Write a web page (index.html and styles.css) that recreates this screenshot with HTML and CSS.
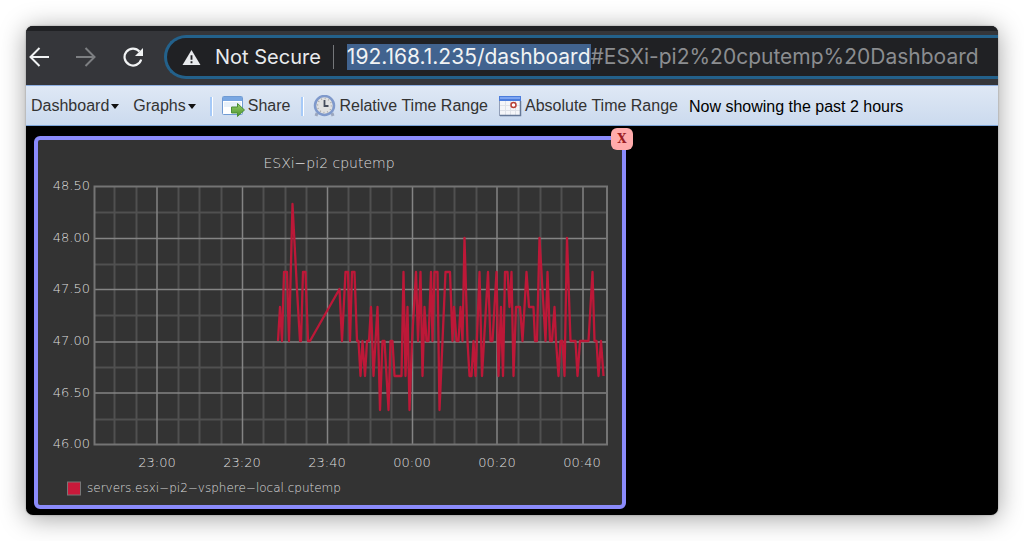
FILE: index.html
```html
<!DOCTYPE html>
<html lang="en">
<head>
<meta charset="utf-8">
<title>ESXi-pi2 cputemp Dashboard</title>
<link rel="stylesheet" href="styles.css">
</head>
<body>
<div class="window">
  <header class="browser-bar">
    <nav class="nav-buttons">
      <button type="button" class="nav-button" aria-label="Back">
        <svg viewBox="0 0 20 20" fill="none" stroke="#f1f3f4" stroke-width="2"><path d="M20 10H2M10.500 1L1.500 10l9 9"/></svg>
      </button>
      <button type="button" class="nav-button" aria-label="Forward">
        <svg viewBox="0 0 20 20" fill="none" stroke="#7d7f82" stroke-width="2"><path d="M0 10h18M9.500 1l9 9-9 9"/></svg>
      </button>
      <button type="button" class="nav-button" aria-label="Reload">
        <svg viewBox="0 0 20 20" fill="none" stroke="#f1f3f4" stroke-width="2.200"><path d="M18.200 12.500A8.500 8.500 0 1 1 16.500 4.500"/><path d="M20 1v8h-8z" fill="#f1f3f4" stroke="none"/></svg>
      </button>
    </nav>
    <div class="omnibox">
      <svg class="warning" viewBox="0 0 20 18"><path d="M10 1L19.500 17H.5z" fill="#e8eaed"/><path d="M10 6.500v5M10 13v2" stroke="#202124" stroke-width="2"/></svg>
      <label class="security" for="address">Not Secure</label>
      <span class="divider"></span>
      <input id="address" class="address" type="text" spellcheck="false" value="192.168.1.235/dashboard#ESXi-pi2%20cputemp%20Dashboard">
    </div>
  </header>
  <div class="toolbar">
    <button type="button" class="tool menu">Dashboard<span class="caret"></span></button>
    <button type="button" class="tool menu">Graphs<span class="caret"></span></button>
    <span class="separator"></span>
    <button type="button" class="tool">
      <svg class="tool-icon" viewBox="0 0 23 22"><defs><linearGradient id="arrow" x2="0" y2="1"><stop stop-color="#9bd06b"/><stop offset="1" stop-color="#47912c"/></linearGradient></defs><rect x=".5" y="1.500" width="20" height="18" rx="1" fill="#fff" stroke="#709bd3"/><path d="M1 2h19v4H1z" fill="#79a7e2"/><path d="M2 7h17v5H2z" fill="#e8f1fa"/><path d="M9.500 12h6V8.500l7 6.500-7 6.500v-3.500h-6z" fill="url(#arrow)" stroke="#4b8e36"/></svg>
      Share
    </button>
    <span class="separator"></span>
    <button type="button" class="tool">
      <svg class="tool-icon" viewBox="0 0 23 22"><path d="M4 18l-1 3M19 18l1 3" stroke="#9ca7bd" stroke-width="3"/><circle cx="11.500" cy="10.500" r="9.500" fill="#e0e1e2" stroke="#7f99cb" stroke-width="2.500"/><circle cx="11.500" cy="10.500" r="7" fill="none" stroke="#aaa" stroke-width="1.500" stroke-dasharray="1 2.660"/><path d="M11.500 5v6h4" fill="none" stroke="#474e5e" stroke-width="1.800"/></svg>
      Relative Time Range
    </button>
    <button type="button" class="tool">
      <svg class="tool-icon" viewBox="0 0 23 22"><rect x=".5" y="1.500" width="21" height="19" fill="#f5f6f9" stroke="#929fb8"/><path d="M0 1h22v5H0z" fill="#4b7cdc"/><path d="M1 2h20v2H1z" fill="#7da4f1"/><path d="M1 10.500h20M1 15.500h20M6.500 6v14M11.500 6v14M16.500 6v14" stroke="#dfe2e8"/><circle cx="14.500" cy="10" r="2.500" fill="#fff" stroke="#b94036" stroke-width="1.500"/><path d="M21.500 6v14.500H1" fill="none" stroke="#667998" stroke-width="1.500"/></svg>
      Absolute Time Range
    </button>
    <span class="status">Now showing the past 2 hours</span>
  </div>
  <main class="workspace">
    <section class="graph">
      <button type="button" class="close" aria-label="Close graph">X</button>
      <svg class="chart" viewBox="38 140 584 365" role="img" aria-label="ESXi-pi2 cputemp">
        <path class="minor" d="M114.500 187v257M136.500 187v257M178.500 187v257M199.500 187v257M221.500 187v257M263.500 187v257M285.500 187v257M306.500 187v257M348.500 187v257M370.500 187v257M391.500 187v257M434.500 187v257M454.500 187v257M476.500 187v257M518.500 187v257M540.500 187v257M561.500 187v257M95 212.500h512M95 264.500h512M95 315.500h512M95 367.500h512M95 419.500h512"/>
        <path class="major" d="M157 187v257M242.500 187v257M327.500 187v257M412.500 187v257M497 187v257M583 187v257M95 238.500h512M95 289.500h512M95 342h512M95 393h512"/>
        <rect class="frame" x="94.500" y="186.500" width="512.500" height="258"/>
        <polyline class="series" points="278,341 280,307 282,341 284,272 287,272 289,341 292.500,204 297,290 300,341 301,341 303,272 305.500,272 308,341 310,341 339.500,289 342,341 345.500,272 348,272 350,341 352,272 354.500,272 357,341 358.500,341 360.500,376 362.500,341 365,376 367,341 369,341 371,307 373.500,376 377.500,307 380,410 382.500,341 384.500,341 388.500,410 390.500,341 392.500,341 394.500,376 401.500,376 403.500,272 405.500,376 407.500,307 409.500,410 412,341 416,272 418,341 420.500,272 422.500,376 424.500,307 426.500,341 428.500,341 431,272 432.500,341 434.500,272 437.500,272 439.500,410 445.500,272 450,272 452.500,341 454,307 456.500,341 458.500,341 460.500,307 462.500,341 464.500,238 467.500,341 469.500,376 471.500,376 473.500,341 475.500,376 479.500,272 482,376 488,272 490.500,341 492.500,341 496.500,272 498.500,376 501,307 503,376 505,272 507.500,272 509.500,307 511.500,272 513.500,376 516,307 520,307 522.500,341 526.500,272 529,307 533.500,307 535,341 537,341 539.500,238 543.500,307 545.500,341 547.500,272 550,341 552,341 554.500,307 556,341 558.500,376 560.500,341 562.500,341 564.500,376 567,238 570.500,341 575.500,341 577.500,376 580,341 588.500,341 592.500,272 594.500,341 596.500,341 598.500,376 601,341 603.500,376"/>
        <text class="title" x="329" y="168">ESXi−pi2 cputemp</text>
        <g class="y-labels"><text x="90" y="190">48.50</text><text x="90" y="242">48.00</text><text x="90" y="293">47.50</text><text x="90" y="345">47.00</text><text x="90" y="397">46.50</text><text x="90" y="448">46.00</text></g>
        <g class="x-labels"><text x="157" y="467">23:00</text><text x="242" y="467">23:20</text><text x="327" y="467">23:40</text><text x="412" y="467">00:00</text><text x="497" y="467">00:20</text><text x="582" y="467">00:40</text></g>
        <rect class="swatch" x="67.500" y="482" width="13" height="13"/>
        <text class="legend" x="87" y="492">servers.esxi−pi2−vsphere−local.cputemp</text>
      </svg>
    </section>
  </main>
</div>
<script src="script.js"></script>
</body>
</html>
```
FILE: styles.css
```css
* { box-sizing: border-box; }
body { margin: 0; padding: 26px; background: #fff; font-family: "Liberation Sans", Arial, sans-serif; min-height: 100vh; display: flex; }
button { border: 0; padding: 0; background: none; font: inherit; color: inherit; }
.window { flex: 1; min-width: 0; display: flex; flex-direction: column; overflow: hidden; border-radius: 7px; background: #000; box-shadow: 0 0 2px rgba(0,0,0,.35), 0 3px 26px rgba(0,0,0,.38); }
.browser-bar { display: flex; align-items: center; height: 59px; padding: 0 0 2px 3px; border-top: 5px solid #202124; background: #35363a; font-family: Inter, Roboto, sans-serif; font-size: 20px; }
.nav-buttons { display: flex; gap: 27px; margin-right: 21px; }
.nav-button { width: 20px; height: 20px; }
.nav-button svg { display: block; width: 20px; height: 20px; }
.omnibox { flex: 1; min-width: 0; display: flex; align-items: center; height: 44px; padding-left: 15px; border: 3px solid #23618b; border-right: 0; border-radius: 22px 0 0 22px; background: #202124; color: #e8eaed; }
.warning { flex: none; width: 19px; height: 17px; margin-right: 14px; }
.security { white-space: nowrap; }
.divider { flex: none; width: 1px; height: 24px; margin: 0 13px 0 12px; background: #75777a; }
.address { flex: 1; min-width: 0; height: 26px; padding: 0; border: 0; outline: 0; background: none; color: #8b8d90; caret-color: transparent; font: 21px/26px Inter, Roboto, sans-serif; }
.address::selection { background: #41638f; color: #f1f3f4; }
.toolbar { display: flex; align-items: center; height: 41px; padding: 1px 0 0 5px; border-top: 1px solid #8fb0e2; border-bottom: 1px solid #7da5d8; background: linear-gradient(#dfe8f5, #cbdaee); color: #333; font-size: 16px; white-space: nowrap; }
.tool { display: flex; align-items: center; gap: 3px; margin-right: 11px; }
.menu { gap: 2px; margin-right: 14px; }
.caret { border: 4px solid transparent; border-top: 5px solid #111; border-bottom: 0; }
.tool-icon { width: 23px; height: 22px; }
.separator { width: 3px; height: 19px; margin-right: 9px; border-left: 2px solid #a6caf8; border-right: 1px solid #fff; }
.status { color: #000; padding-top: 2px; }
.workspace { flex: 1; padding: 10px 8px 6px; }
.graph { position: relative; width: 592px; max-width: 100%; border: 4px solid #8b8bfb; border-radius: 6px; background: #333; }
.chart { display: block; width: 100%; height: auto; fill: #ddd; font-family: "DejaVu Sans", sans-serif; font-weight: 200; font-size: 12px; }
.close { position: absolute; top: -12px; right: -11px; width: 22px; height: 22px; border-radius: 6px; background: #ffabab; color: #9b1d24; font: bold 12px "DejaVu Serif", serif; }
.minor { stroke: #505050; stroke-width: 2; }
.major { stroke: #848484; stroke-width: 1.500; }
.frame { fill: none; stroke: #747474; stroke-width: 2; }
.series { fill: none; stroke: #bd1838; stroke-width: 2.300; stroke-linejoin: round; }
.title { font-size: 14px; text-anchor: middle; }
.y-labels { font-size: 13px; text-anchor: end; }
.x-labels { font-size: 13px; text-anchor: middle; }
.swatch { fill: #c8193a; stroke: #777; }
```
FILE: script.js
```js
const address = document.getElementById("address");
address.focus();
address.setSelectionRange(0, address.value.indexOf("#"));
```
